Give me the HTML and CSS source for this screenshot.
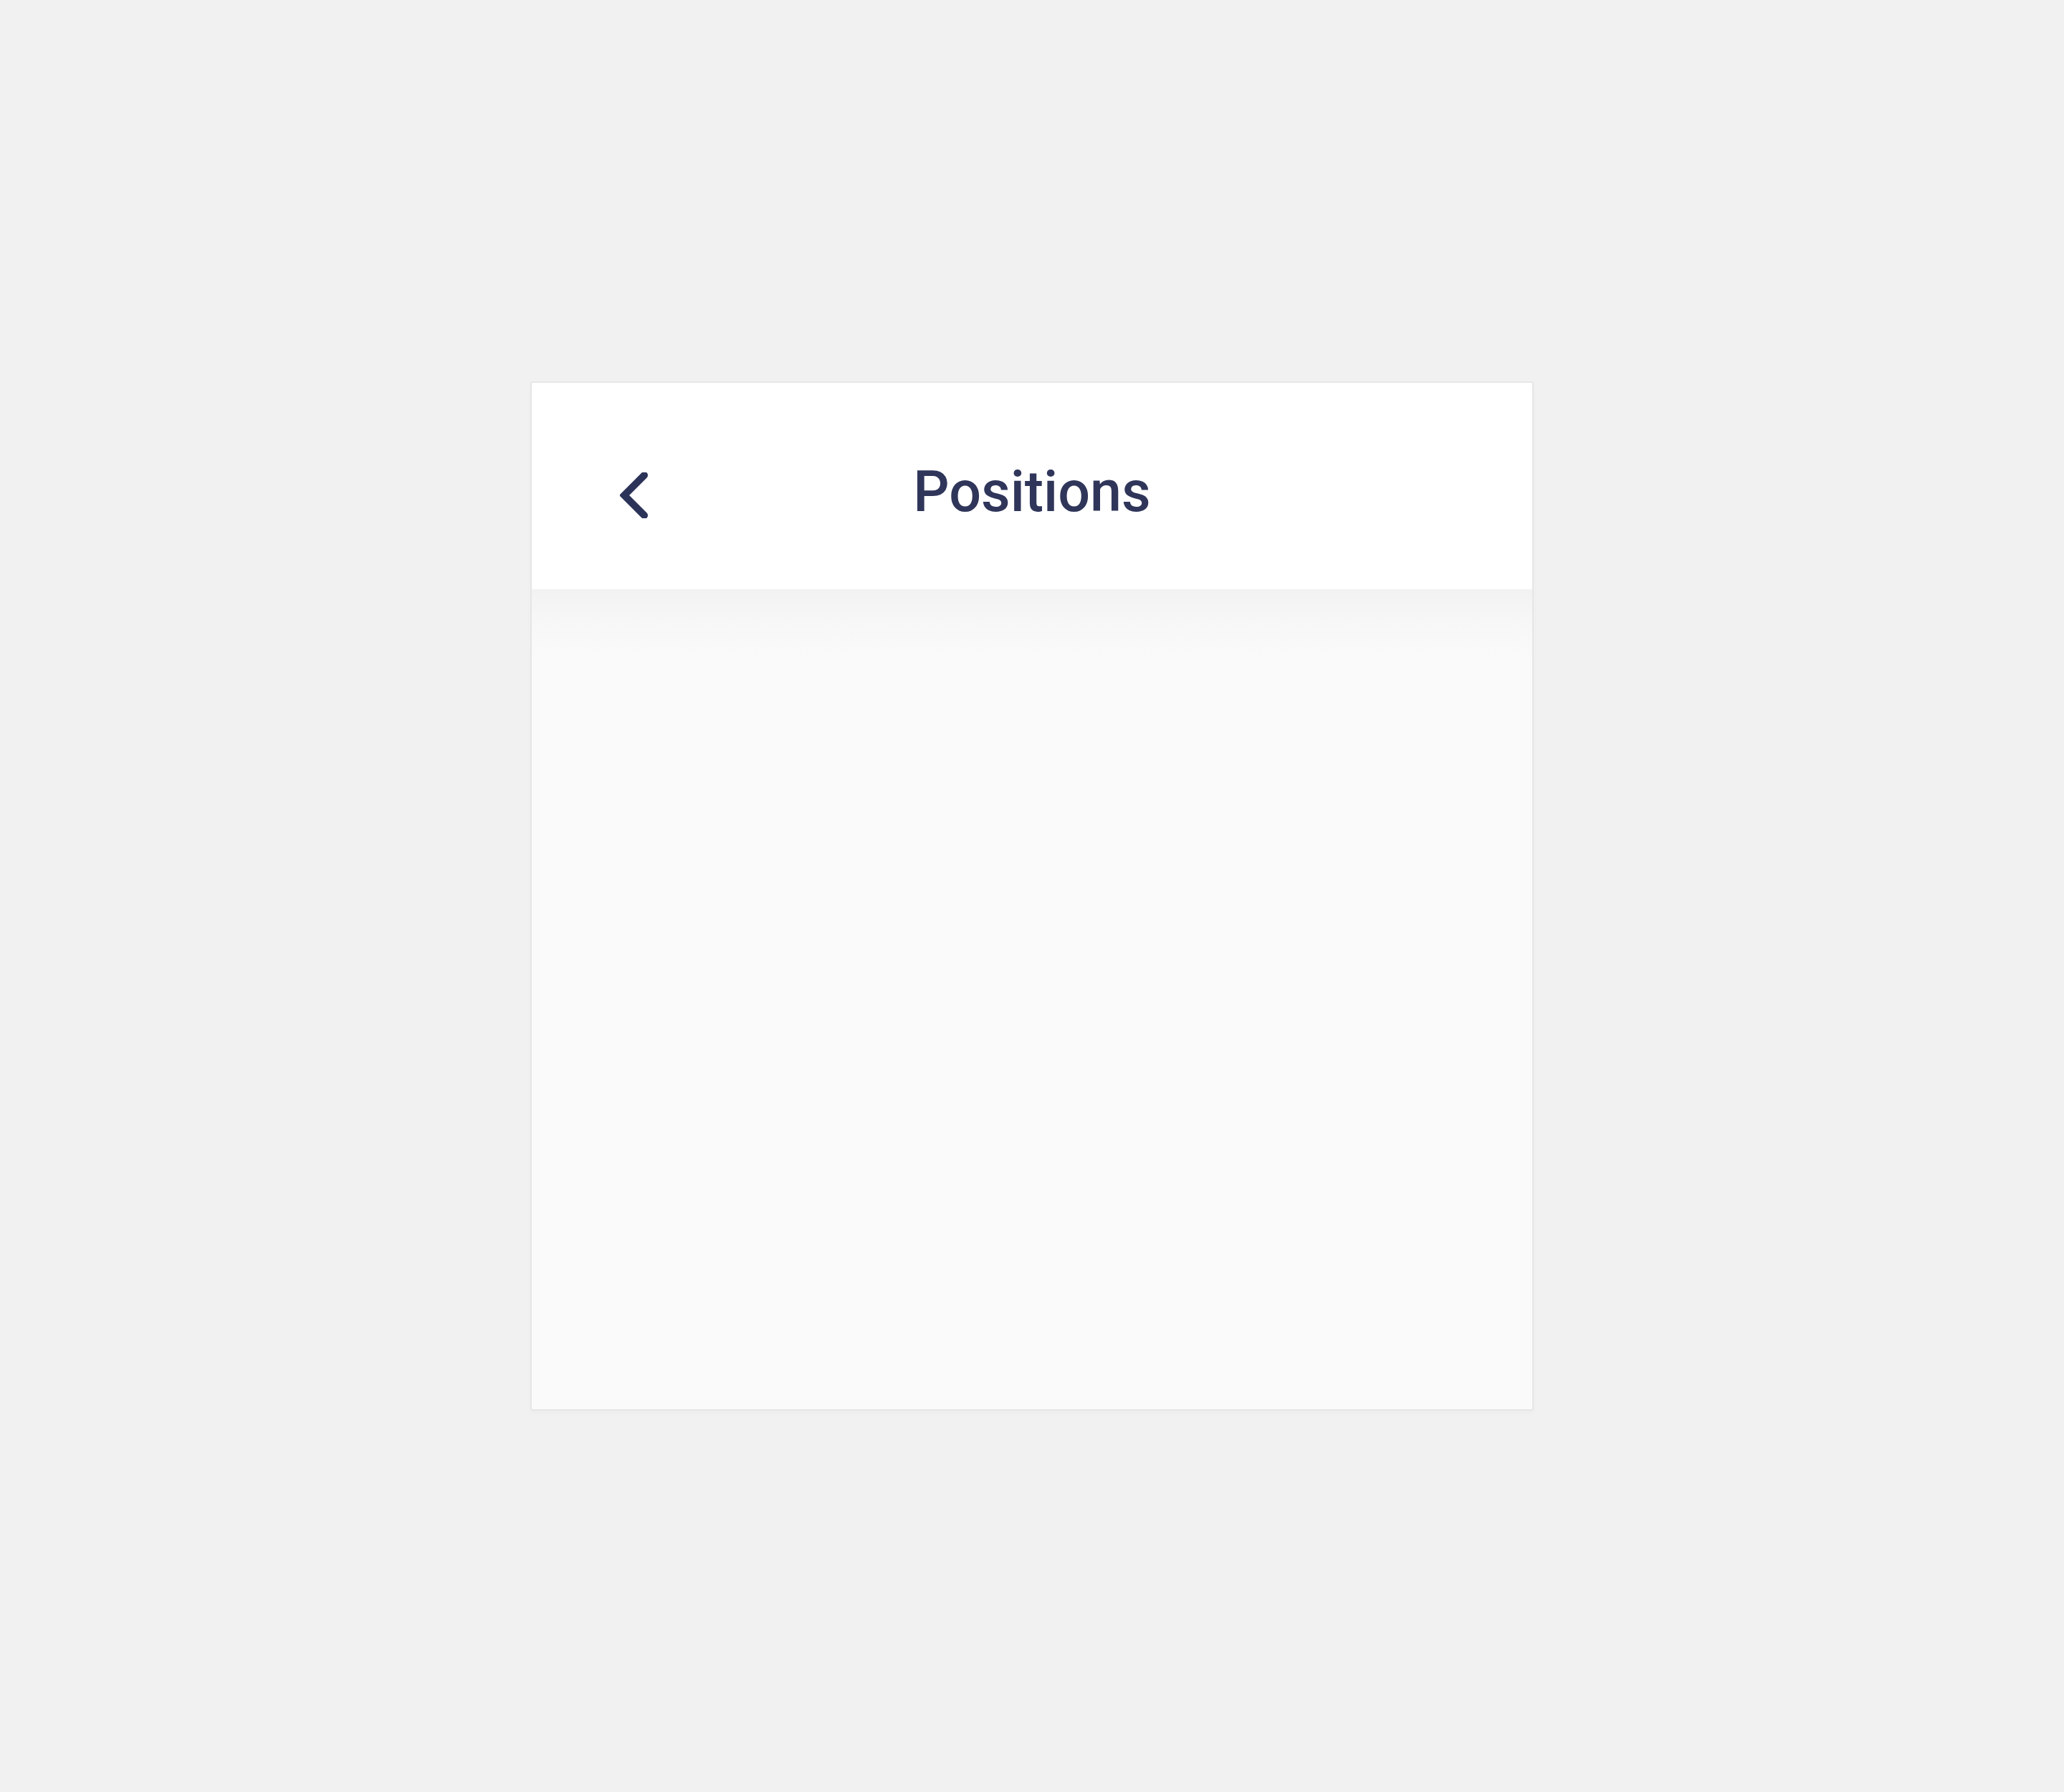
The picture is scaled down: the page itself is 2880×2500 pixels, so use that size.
FILE: index.html
```html
<!DOCTYPE html>
<html lang="en">
<head>
<meta charset="utf-8">
<title>Positions</title>
<link rel="stylesheet" href="styles.css">
</head>
<body>
<div class="page">
  <div class="card">
    <header class="header">
      <button class="back" aria-label="Back">
        <svg viewBox="0 0 40 64" width="40" height="64">
          <path d="M34 4 L6 32 L34 60" fill="none" stroke="#2c3358" stroke-width="10" stroke-linecap="round" stroke-linejoin="miter"/>
        </svg>
      </button>
      <h1 class="title">Positions</h1>
    </header>
    <main class="content"></main>
  </div>
</div>
</body>
</html>
```

FILE: styles.css
```css
html, body {
  margin: 0;
  padding: 0;
  background: #f1f1f1;
  font-family: "Liberation Sans", Arial, sans-serif;
}
.page {
  min-height: 2500px;
  display: flex;
  align-items: center;
  justify-content: center;
}
.card {
  box-sizing: border-box;
  width: 1400px;
  height: 1436px;
  border: 2px solid #e6e6e6;
  border-radius: 4px;
  background: #fafafa;
  display: flex;
  flex-direction: column;
  overflow: hidden;
  box-shadow: 0 4px 6px rgba(0,0,0,0.02);
}
.header {
  position: relative;
  height: 288px;
  flex: none;
  background: #ffffff;
  display: flex;
  align-items: center;
  justify-content: center;
}
.back {
  position: absolute;
  left: 119px;
  top: 123px;
  width: 48px;
  height: 68px;
  padding: 0;
  border: 0;
  background: transparent;
  display: flex;
  align-items: center;
  justify-content: center;
}
.back svg {
  display: block;
  width: 40px;
  height: 64px;
}
.title {
  margin: 0;
  font-family: Roboto, "Liberation Sans", Arial, sans-serif;
  font-size: 79px;
  font-weight: 500;
  color: #30365a;
  letter-spacing: 0;
  line-height: 1;
  transform: translateY(8px);
}
.content {
  flex: 1;
  background: linear-gradient(to bottom, #f2f2f2 0px, #f7f7f7 45px, #fafafa 95px, #fafafa 100%);
}
```
